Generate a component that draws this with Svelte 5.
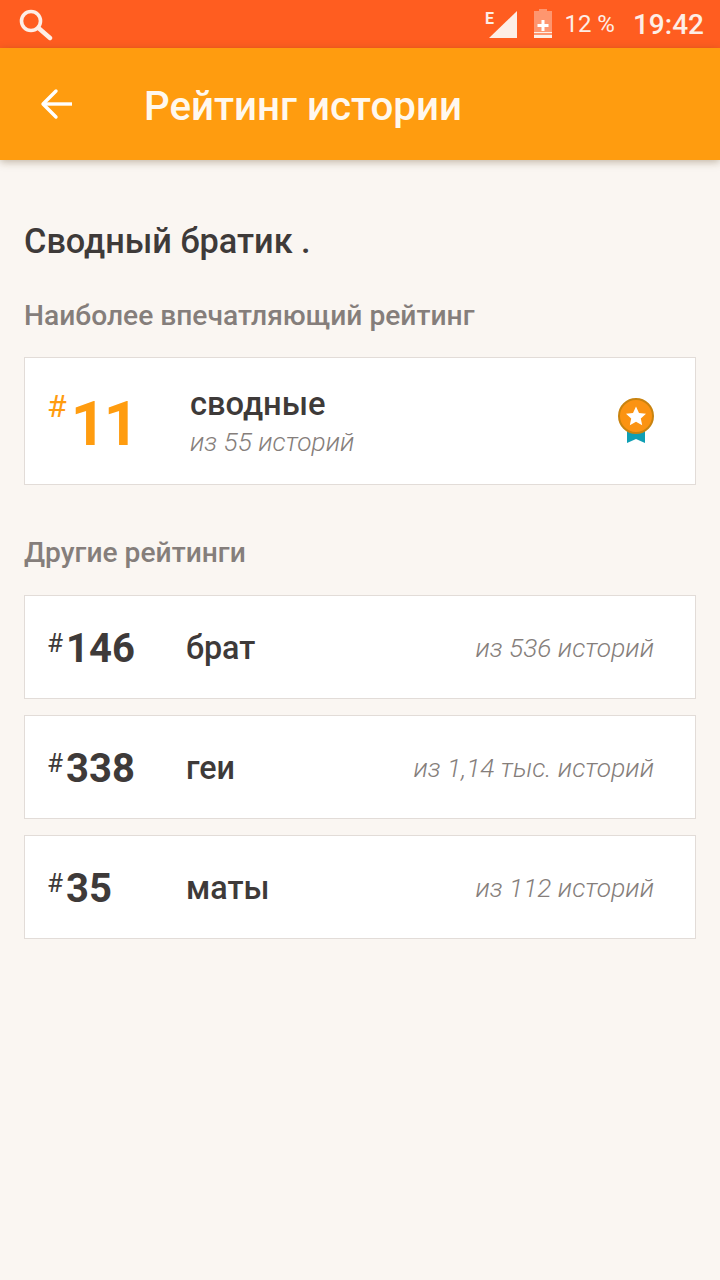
<script>
  const others = [
    { rank: 146, tag: 'брат', total: 'из 536 историй' },
    { rank: 338, tag: 'геи', total: 'из 1,14 тыс. историй' },
    { rank: 35, tag: 'маты', total: 'из 112 историй' }
  ];
</script>

<div class="page">
  <div class="status">
    <svg class="search" width="36" height="36" viewBox="0 0 36 36">
      <circle cx="13" cy="16" r="9.500" fill="none" stroke="#fdeee6" stroke-width="3.600" />
      <path d="M20.500 23l11.500 10" stroke="#fdeee6" stroke-width="4.400" stroke-linecap="round" />
    </svg>
    <div class="status-right">
      <svg width="34" height="30" viewBox="0 0 34 30">
        <text x="0" y="15" class="net">E</text>
        <path d="M4 29L32 2v27z" fill="#fdeee6" />
      </svg>
      <svg class="batt" width="20" height="30" viewBox="0 0 20 30">
        <path d="M6 0h8v2h5v27H1V2h5z" fill="#fdeee6" fill-opacity=".4" />
        <path d="M1 23h18v1H1zM1 26h18v3H1z" fill="#fdeee6" />
        <path d="M8.500 11h3v4h4v3h-4v4h-3v-4h-4v-3h4z" fill="#fff" />
      </svg>
      <span class="pct">12 %</span>
      <span class="clock">19:42</span>
    </div>
  </div>

  <header class="bar">
    <svg class="back" width="36" height="36" viewBox="0 0 36 36">
      <path d="M5 18h29" fill="none" stroke="#fff" stroke-width="3.400" />
      <path d="M18 5L5 18l13 13" fill="none" stroke="#fff" stroke-width="3.400" stroke-linecap="round" stroke-linejoin="round" />
    </svg>
    <h1>Рейтинг истории</h1>
  </header>

  <main>
    <h2>Сводный братик .</h2>
    <h3>Наиболее впечатляющий рейтинг</h3>

    <div class="card top">
      <div class="rank">
        <span class="hash">#</span><span class="num">11</span>
      </div>
      <div class="info">
        <div class="tag">сводные</div>
        <div class="total">из 55 историй</div>
      </div>
      <svg class="medal" width="36" height="46" viewBox="0 0 36 46">
        <path d="M9 28h18v17l-9-4-9 4z" fill="#0f9fb4" />
        <circle cx="18" cy="18" r="17" fill="#fb9312" stroke="#c9830f" stroke-width="2" />
        <path d="M18 8.500l3 6.400 7 .8-5.200 4.700 1.400 6.900-6.200-3.500-6.200 3.500 1.400-6.900L8 15.700l7-.8z" fill="#fff" />
      </svg>
    </div>

    <h3 class="other">Другие рейтинги</h3>

    <div class="list">
      {#each others as o}
        <div class="card row">
          <div class="rank">
            <span class="hash">#</span><span class="num">{o.rank}</span>
          </div>
          <div class="tag">{o.tag}</div>
          <div class="total">{o.total}</div>
        </div>
      {/each}
    </div>
  </main>
</div>

<style>
  :global(body) {
    margin: 0;
    background: #faf6f2;
  }

  .page {
    width: 720px;
    min-height: 1280px;
    background: #faf6f2;
    font-family: Roboto, sans-serif;
    color: #3e3a39;
  }

  .status {
    height: 48px;
    background: #ff5d20;
    display: flex;
    align-items: center;
    justify-content: space-between;
    padding: 0 16px 0 18px;
    box-sizing: border-box;
  }

  .search {
    display: block;
    margin-top: -2px;
  }

  .status-right {
    display: flex;
    align-items: center;
    color: #fdeee6;
  }

  .net {
    font: 700 16px Roboto, sans-serif;
    fill: #fdeee6;
  }

  .batt {
    margin-left: 14px;
  }

  .pct {
    font-size: 24px;
    margin-left: 11px;
  }

  .clock {
    font-size: 28px;
    font-weight: 500;
    margin-left: 18px;
  }

  .bar {
    height: 112px;
    background: #ff9c0f;
    display: flex;
    align-items: center;
    padding-left: 38px;
    box-shadow: 0 2px 8px rgba(90, 60, 20, 0.35);
  }

  .back {
    display: block;
  }

  h1 {
    margin: 4px 0 0 70px;
    font-size: 40.300px;
    font-weight: 500;
    color: #fff8ee;
  }

  main {
    padding: 61px 24px 0;
  }

  h2 {
    margin: 0;
    font-size: 34.300px;
    line-height: 40px;
    font-weight: 500;
    color: #3e3a39;
  }

  h3 {
    margin: 37px 0 0;
    font-size: 28.200px;
    line-height: 36px;
    font-weight: 500;
    color: #857e7b;
  }

  .other {
    margin-top: 50px;
  }

  .card {
    background: #fff;
    border: 1px solid #e2dcd8;
    box-sizing: border-box;
    display: flex;
    align-items: center;
  }

  .top {
    height: 128px;
    margin-top: 23px;
    padding: 0 41px 0 22px;
  }

  .top .rank {
    width: 143px;
    color: #ff9c0f;
  }

  .top .hash {
    font-size: 32px;
    top: -15px;
    margin-right: 4px;
  }

  .top .num {
    font-size: 61px;
    font-weight: 700;
    line-height: 70px;
    letter-spacing: -2px;
    margin-top: 6px;
  }

  .info {
    flex: 1;
    padding-top: 5px;
  }

  .info .tag {
    font-size: 32.700px;
    line-height: 38px;
    font-weight: 500;
  }

  .info .total {
    line-height: 39px;
  }

  .medal {
    display: block;
  }

  .list {
    display: flex;
    flex-direction: column;
    gap: 16px;
    margin-top: 24px;
  }

  .row {
    height: 104px;
    padding: 2px 41px 0 22px;
  }

  .rank {
    display: flex;
    align-items: center;
  }

  .row .rank {
    width: 139px;
  }

  .hash {
    position: relative;
    top: -5px;
    font-size: 26px;
    font-weight: 400;
    margin-right: 3px;
  }

  .row .num {
    font-size: 40px;
    font-weight: 700;
    margin-top: 1px;
  }

  .row .tag {
    flex: 1;
    font-size: 32.300px;
    font-weight: 500;
  }

  .total {
    font-size: 26.300px;
    font-style: italic;
    font-weight: 300;
    color: #857e7b;
  }
</style>
